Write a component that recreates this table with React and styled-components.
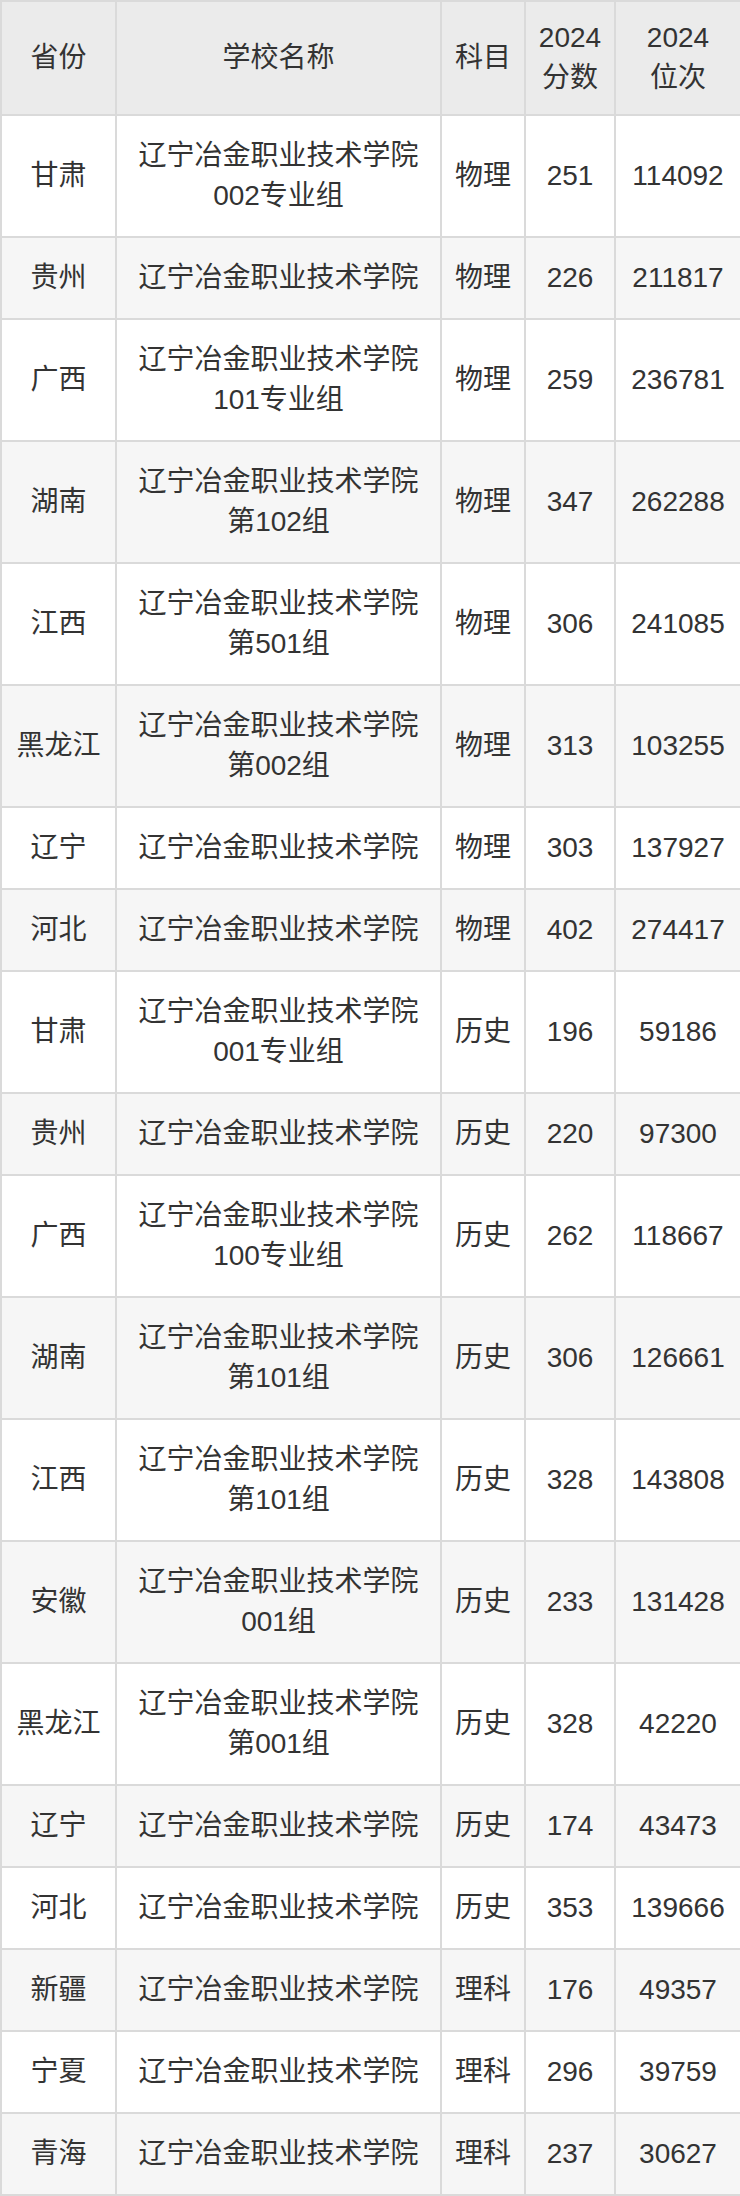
import React from 'react';
import styled, {createGlobalStyle} from 'styled-components';

const GlobalStyle = createGlobalStyle`
    body {
        margin: 0;
        background: #ffffff;
        font-family: "Liberation Sans", "Noto Sans CJK SC", sans-serif;
    }
`;

const rows = [
    ["甘肃", ["辽宁冶金职业技术学院", "002专业组"], "物理", "251", "114092"],
    ["贵州", ["辽宁冶金职业技术学院"], "物理", "226", "211817"],
    ["广西", ["辽宁冶金职业技术学院", "101专业组"], "物理", "259", "236781"],
    ["湖南", ["辽宁冶金职业技术学院", "第102组"], "物理", "347", "262288"],
    ["江西", ["辽宁冶金职业技术学院", "第501组"], "物理", "306", "241085"],
    ["黑龙江", ["辽宁冶金职业技术学院", "第002组"], "物理", "313", "103255"],
    ["辽宁", ["辽宁冶金职业技术学院"], "物理", "303", "137927"],
    ["河北", ["辽宁冶金职业技术学院"], "物理", "402", "274417"],
    ["甘肃", ["辽宁冶金职业技术学院", "001专业组"], "历史", "196", "59186"],
    ["贵州", ["辽宁冶金职业技术学院"], "历史", "220", "97300"],
    ["广西", ["辽宁冶金职业技术学院", "100专业组"], "历史", "262", "118667"],
    ["湖南", ["辽宁冶金职业技术学院", "第101组"], "历史", "306", "126661"],
    ["江西", ["辽宁冶金职业技术学院", "第101组"], "历史", "328", "143808"],
    ["安徽", ["辽宁冶金职业技术学院", "001组"], "历史", "233", "131428"],
    ["黑龙江", ["辽宁冶金职业技术学院", "第001组"], "历史", "328", "42220"],
    ["辽宁", ["辽宁冶金职业技术学院"], "历史", "174", "43473"],
    ["河北", ["辽宁冶金职业技术学院"], "历史", "353", "139666"],
    ["新疆", ["辽宁冶金职业技术学院"], "理科", "176", "49357"],
    ["宁夏", ["辽宁冶金职业技术学院"], "理科", "296", "39759"],
    ["青海", ["辽宁冶金职业技术学院"], "理科", "237", "30627"],
];

export default function App() {
    return <>
        <GlobalStyle />
        <Table>
            <colgroup>
                <col style={{width: 115}} />
                <col style={{width: 325}} />
                <col style={{width: 84}} />
                <col style={{width: 90}} />
                <col style={{width: 126}} />
            </colgroup>
            <thead>
                <tr>
                    <Th>省份</Th>
                    <Th>学校名称</Th>
                    <Th>科目</Th>
                    <Th>2024<br />分数</Th>
                    <Th>2024<br />位次</Th>
                </tr>
            </thead>
            <tbody>
                {rows.map((r, i) => (
                    <Row key={i} $alt={i % 2 === 1}>
                        <Td>{r[0]}</Td>
                        <Td>{r[1].map((line, j) => <Line key={j}>{line}</Line>)}</Td>
                        <Td>{r[2]}</Td>
                        <Td>{r[3]}</Td>
                        <Td>{r[4]}</Td>
                    </Row>
                ))}
            </tbody>
        </Table>
    </>
}

const Table = styled.table`
    width: 740px;
    table-layout: fixed;
    border-collapse: collapse;
    color: #333333;
    font-size: 28px;
    line-height: 40px;
`;

const Th = styled.th`
    background-color: #ebebeb;
    border: 2px solid #dadada;
    padding: 16px 0;
    font-weight: normal;
    text-align: center;
`;

const Row = styled.tr`
    background-color: ${p => p.$alt ? '#f6f6f6' : '#ffffff'};
`;

const Td = styled.td`
    border: 2px solid #dadada;
    padding: 20px 0;
    text-align: center;
    vertical-align: middle;
`;

const Line = styled.div`
    white-space: nowrap;
`;
